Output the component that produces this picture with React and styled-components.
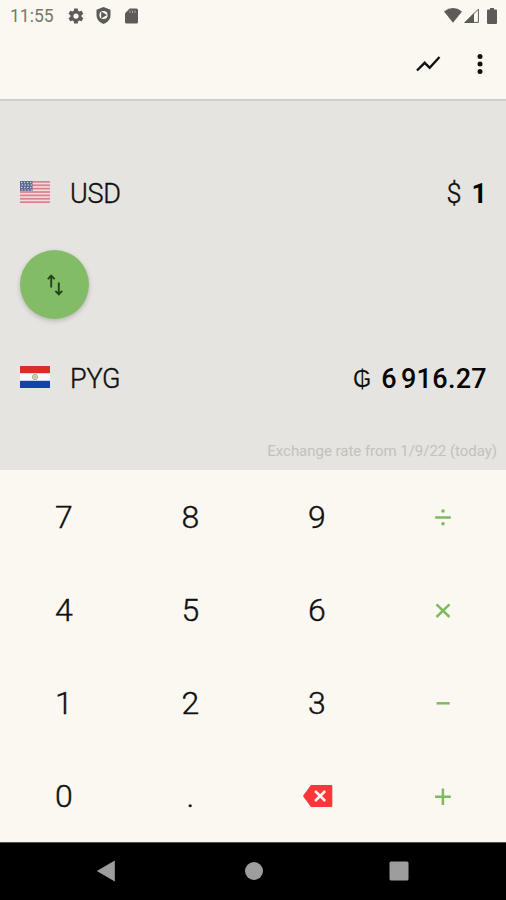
import React from "react";
import styled, { createGlobalStyle } from "styled-components";

const GlobalStyle = createGlobalStyle`
  * { box-sizing: border-box; }
  body { margin: 0; background: #fbf8f1; }
`;

const Screen = styled.div`
  width: 506px;
  height: 900px;
  display: flex;
  flex-direction: column;
  background: #fbf8f1;
  color: #101010;
  font-family: Roboto, "Liberation Sans", sans-serif;
  overflow: hidden;
`;

const StatusBar = styled.header`
  height: 32px;
  flex: none;
  display: flex;
  align-items: center;
  justify-content: space-between;
  padding: 0 9px 1px 10px;
  color: #5c5b58;
`;

const StatusGroup = styled.div`
  display: flex;
  align-items: center;
`;

const Clock = styled.span`
  width: 57px;
  font-size: 17.5px;
  line-height: 32px;
  color: #777673;
`;

const Glyph = styled.svg`
  display: block;
  flex: none;
  width: ${(p) => p.$w}px;
  height: ${(p) => p.$h}px;
  margin-left: ${(p) => p.$gap || 0}px;
`;

const Toolbar = styled.nav`
  height: 69px;
  flex: none;
  display: flex;
  justify-content: flex-end;
  align-items: center;
  padding: 0 11px 3px 0;
  gap: 22px;
  border-bottom: 2px solid #d0cfcb;
`;

const IconButton = styled.button`
  border: 0;
  padding: 0;
  background: none;
  color: #111;
`;

const Converter = styled.main`
  height: 369px;
  flex: none;
  display: flex;
  flex-direction: column;
  background: #e6e4e0;
  padding: 60px 19px 0 20px;
`;

const CurrencyRow = styled.section`
  height: 64px;
  display: flex;
  align-items: center;
  padding-top: 2px;
  font-size: 27px;
  line-height: 32px;
`;

const Flag = styled.svg`
  display: block;
  width: 30px;
  height: 22px;
  margin: 0 20px 5px 0;
`;

const Code = styled.span`
  flex: 1;
  font-weight: 300;
  -webkit-text-stroke: 0.4px currentColor;
  letter-spacing: -0.2px;
`;

const Sign = styled.span`
  margin-right: ${(p) => p.$gap}px;
  font-size: ${(p) => p.$size || 27}px;
  font-weight: 300;
  -webkit-text-stroke: ${(p) => (p.$size ? 0 : 0.4)}px currentColor;
`;

const Amount = styled.span`
  font-weight: ${(p) => p.$weight || 500};
  color: #050505;
  letter-spacing: ${(p) => p.$track || 0}px;
  word-spacing: -3px;
`;

const SwapButton = styled.button`
  width: 69px;
  height: 69px;
  margin: 25px 0 27px;
  border: 0;
  border-radius: 50%;
  background: #83bc66;
  color: #24401c;
  display: flex;
  align-items: center;
  justify-content: center;
  padding: 0;
  box-shadow: 0 2px 5px rgba(0, 0, 0, 0.2);
`;

const RateNote = styled.p`
  margin: 32px -10px 0 0;
  text-align: right;
  font-size: 15px;
  letter-spacing: -0.03px;
  line-height: 18px;
  color: #c2c1bd;
`;

const Keypad = styled.div`
  height: 372px;
  flex: none;
  display: grid;
  grid-template: repeat(4, 93px) / repeat(4, 1fr);
`;

const Key = styled.button`
  border: 0;
  background: none;
  padding: 0 0 0 1px;
  display: flex;
  align-items: center;
  justify-content: center;
  font-family: inherit;
  font-size: 32px;
  font-weight: 300;
  -webkit-text-stroke: 0.4px currentColor;
  line-height: 40px;
  color: ${(p) => (p.$operator ? "#7fba62" : "#101010")};
`;

const NavBar = styled.footer`
  height: 58px;
  flex: none;
  background: #000;
  border-top: 1px solid #55544f;
  color: #9d9d9d;
  display: flex;
  align-items: center;
  justify-content: space-between;
  padding: 0 97px 1px 96px;
`;

const OPERATORS = {
  divide: (
    <>
      <path d="M4.2 12.5H19.8" />
      <circle cx="12" cy="6" r="1.8" fill="currentColor" stroke="none" />
      <circle cx="12" cy="18.8" r="1.8" fill="currentColor" stroke="none" />
    </>
  ),
  times: <path d="M5.5 6.4L18.5 19M18.5 6.4L5.5 19" />,
  minus: <path d="M5.5 12.3H18.7" />,
  plus: <path d="M4 12.8H19.8M11.9 4.6V21" />,
};

const Operator = ({ kind }) => (
  <Glyph $w={24} $h={24} viewBox="0 0 24 24" fill="none" stroke="currentColor" strokeWidth="2.5">
    {OPERATORS[kind]}
  </Glyph>
);

const Backspace = () => (
  <Glyph $w={30} $h={22} $gap={2} viewBox="0 0 30 22">
    <path d="M8 0H28Q29.3 0 29.3 1.3V20.7Q29.3 22 28 22H8L.4 11.8V10.2Z" fill="#fa3638" />
    <path d="M12.1 6L22.2 16M22.2 6L12.1 16" stroke="#fff4ef" strokeWidth="2.5" />
  </Glyph>
);

const UsFlag = () => (
  <Flag viewBox="0 0 30 22">
    <path fill="#f3dadb" d="M0 0H30V22H0z" />
    {[0, 1, 2, 3, 4, 5, 6].map((n) => (
      <rect key={n} y={n * 3.385} width="30" height="1.7" fill="#d9818f" />
    ))}
    <path fill="#5b6797" d="M0 0H12.5V10H0z" />
    {[1.5, 4, 6.5, 9].map((y, r) =>
      [1.7, 4.7, 7.7, 10.7].map((x) => (
        <circle key={`${x}-${y}`} cx={x + (r % 2 ? 0.5 : 0)} cy={y} r="0.7" fill="#dfe1ec" />
      ))
    )}
  </Flag>
);

const ParaguayFlag = () => (
  <Flag viewBox="0 0 30 22">
    <path fill="#f7f8f7" d="M0 0H30V22H0z" />
    <path fill="#db2d27" d="M0 0H30V7.2H0z" />
    <path fill="#1542a8" d="M0 14.8H30V22H0z" />
    <circle cx="15" cy="11" r="2.6" fill="#dfdfae" stroke="#a5ac88" strokeWidth="1" />
    <circle cx="15" cy="11" r="0.8" fill="#b49c57" />
  </Flag>
);

const KEYS = ["7", "8", "9", "divide", "4", "5", "6", "times", "1", "2", "3", "minus", "0", ".", "back", "plus"];

export default function App() {
  return (
    <>
      <GlobalStyle />
      <Screen>
        <StatusBar>
          <StatusGroup>
            <Clock>11:55</Clock>
            <Glyph $w={18} $h={18} viewBox="0 0 24 24" fill="currentColor">
              <path fillRule="evenodd" d="M19.4 13a7.8 7.8 0 0 0 0-2l2.1-1.6a.5.5 0 0 0 .1-.7l-2-3.4a.5.5 0 0 0-.6-.2l-2.5 1a7.3 7.3 0 0 0-1.7-1L14.4 2.4a.5.5 0 0 0-.5-.4h-4a.5.5 0 0 0-.5.4L9 5.1a7.3 7.3 0 0 0-1.7 1l-2.5-1a.5.5 0 0 0-.6.2l-2 3.4a.5.5 0 0 0 .1.7L4.500 11a7.8 7.8 0 0 0 0 2l-2.2 1.6a.5.5 0 0 0-.1.7l2 3.4c.1.2.4.3.6.2l2.5-1a7.3 7.3 0 0 0 1.700 1l.4 2.700c0 .2.2.4.5.4h4c.2 0 .4-.2.5-.4l.4-2.700a7.3 7.3 0 0 0 1.700-1l2.500 1c.2.1.5 0 .6-.2l2-3.400a.5.5 0 0 0-.1-.7ZM12 15.500a3.500 3.500 0 1 1 0-7 3.500 3.500 0 0 1 0 7Z" />
            </Glyph>
            <Glyph $w={15} $h={17} $gap={11} viewBox="0 0 15 17">
              <path d="M7.5 0L14.5 2.7V8C14.5 12 11.8 15.5 7.5 17C3.2 15.5.5 12 .5 8V2.7Z" fill="currentColor" />
              <path d="M7.5 3.9A4.1 4.1 0 1 0 7.500 12.1A4.1 4.1 0 1 0 7.500 3.9Z" fill="#fbf8f1" />
              <path d="M5.200 4.500L11 8L5.200 11.500Z" fill="currentColor" />
            </Glyph>
            <Glyph $w={13} $h={16} $gap={14} viewBox="0 0 13 16">
              <path d="M4.7.5H11.5Q13 .5 13 2V14Q13 15.5 11.5 15.5H1.5Q0 15.5 0 14V5.2Z" fill="currentColor" />
              <path d="M5 2.500V5M7.500 2.500V5M10 2.500V5" stroke="#a5a39f" strokeWidth="1" />
            </Glyph>
          </StatusGroup>
          <StatusGroup>
            <Glyph $w={18} $h={15} viewBox="0 0 18 15">
              <path d="M0 3.5Q9-3.3 18 3.5L9 14.7Z" fill="currentColor" />
            </Glyph>
            <Glyph $w={15} $h={15} $gap={2} viewBox="0 0 15 15">
              <path d="M1.2 14.4L14.4 1.2V14.4Z" fill="none" stroke="currentColor" strokeWidth="1" />
              <path d="M0 15L10 5V15Z" fill="currentColor" />
            </Glyph>
            <Glyph $w={10} $h={16} $gap={8} viewBox="0 0 10 16">
              <path d="M3 0H7V1.5H9Q10 1.5 10 2.5V15Q10 16 9 16H1Q0 16 0 15V2.5Q0 1.5 1 1.5H3Z" fill="currentColor" />
            </Glyph>
          </StatusGroup>
        </StatusBar>

        <Toolbar>
          <IconButton aria-label="Chart">
            <Glyph $w={30} $h={30} viewBox="0 0 30 30">
              <path d="M4 21.5L11.7 13.8L16.7 18.8L26.5 8" fill="none" stroke="currentColor" strokeWidth="2.4" />
            </Glyph>
          </IconButton>
          <IconButton aria-label="More options">
            <Glyph $w={30} $h={30} viewBox="0 0 30 30" fill="currentColor">
              <circle cx="15" cy="7.5" r="2.5" />
              <circle cx="15" cy="15" r="2.5" />
              <circle cx="15" cy="22.5" r="2.5" />
            </Glyph>
          </IconButton>
        </Toolbar>

        <Converter>
          <CurrencyRow>
            <UsFlag />
            <Code>USD</Code>
            <Sign $gap={10}>$</Sign>
            <Amount $weight={700}>1</Amount>
          </CurrencyRow>
          <SwapButton aria-label="Swap currencies">
            <Glyph $w={18} $h={24} viewBox="0 0 18 24" fill="none" stroke="currentColor" strokeWidth="1.9">
              <path d="M5.2 14.5V3M1.8 6.1L5.2 2.6L8.6 6.1M12.8 9.500V21M9.400 17.900L12.800 21.400L16.200 17.900" />
            </Glyph>
          </SwapButton>
          <CurrencyRow>
            <ParaguayFlag />
            <Code>PYG</Code>
            <Sign $gap={10} $size={23.5}>₲</Sign>
            <Amount $track={0.3}>6 916.27</Amount>
          </CurrencyRow>
          <RateNote>Exchange rate from 1/9/22 (today)</RateNote>
        </Converter>

        <Keypad>
          {KEYS.map((key) => (
            <Key key={key} $operator={key in OPERATORS} aria-label={key}>
              {key in OPERATORS ? <Operator kind={key} /> : key === "back" ? <Backspace /> : key}
            </Key>
          ))}
        </Keypad>

        <NavBar>
          <Glyph $w={19} $h={22} viewBox="0 0 19 22" fill="currentColor">
            <path d="M18.8.5V21.5L.8 11Z" />
          </Glyph>
          <Glyph $w={18} $h={18} $gap={3} viewBox="0 0 18 18" fill="currentColor">
            <circle cx="9" cy="9" r="9" />
          </Glyph>
          <Glyph $w={20} $h={20} viewBox="0 0 20 20" fill="currentColor">
            <rect x=".5" y=".5" width="19" height="19" rx="1.5" />
          </Glyph>
        </NavBar>
      </Screen>
    </>
  );
}
